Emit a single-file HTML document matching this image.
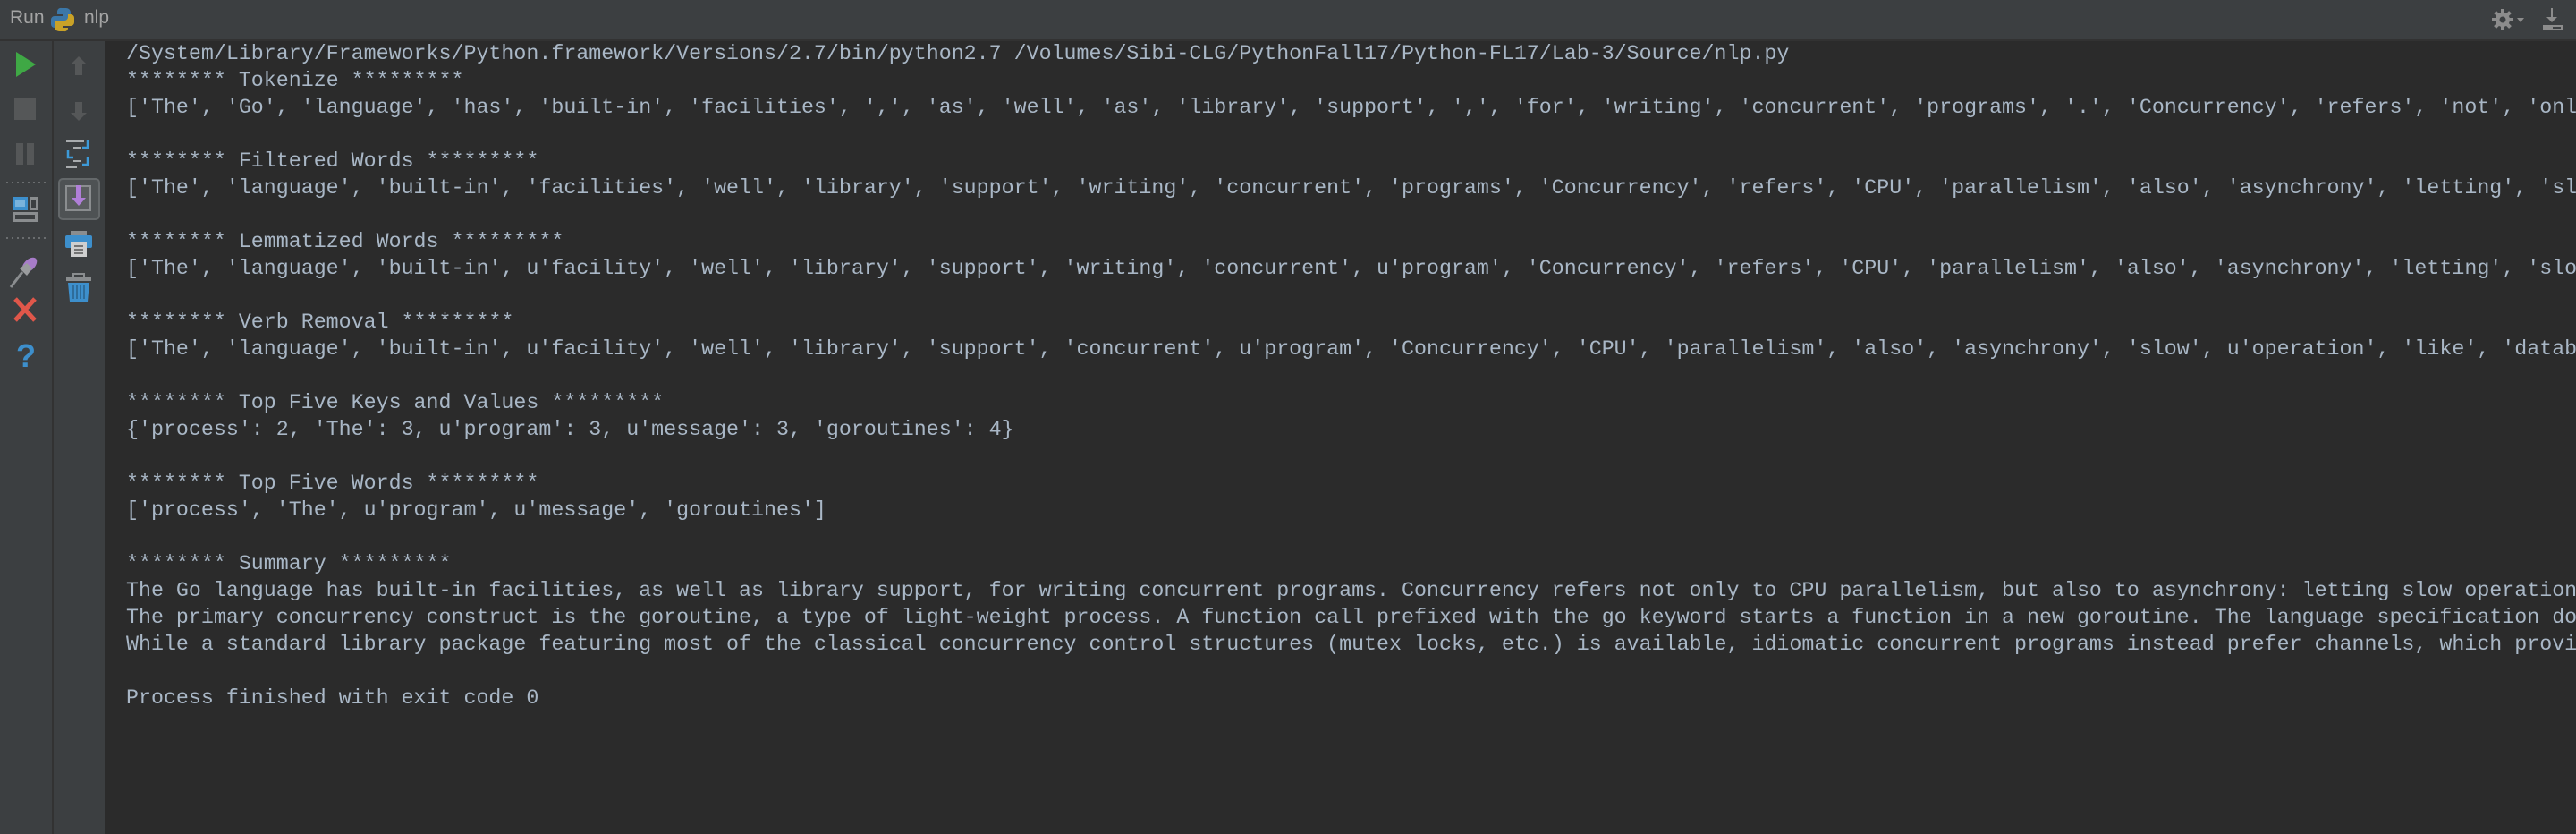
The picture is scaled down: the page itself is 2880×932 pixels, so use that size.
<!DOCTYPE html>
<html><head><meta charset="utf-8"><style>
html,body{margin:0;padding:0;width:2880px;height:932px;overflow:hidden;background:#2b2b2b}
#hdr{position:absolute;left:0;top:0;width:2880px;height:44px;background:#3c3f41;border-bottom:2px solid #323232}
#hdr .t{position:absolute;top:8px;font:21px "Liberation Sans",sans-serif;color:#a4a4a4}
#lp{position:absolute;left:0;top:46px;width:117px;height:886px;background:#3c3f41}
#div{position:absolute;left:58px;top:46px;width:2px;height:886px;background:#323232}
#con{position:absolute;left:141px;top:45px;right:0;font:23.3px/30px "Liberation Mono",monospace;color:#a9b7c6;white-space:pre;overflow:hidden}
</style></head><body>
<div id="hdr">
<span class="t" style="left:11px">Run</span>
<svg style="position:absolute;left:56px;top:8px" width="28" height="28" viewBox="0 0 28 28">
<path d="M13 1h5a5 5 0 0 1 5 5v7a3 3 0 0 1-3 3h-8a4 4 0 0 0-4 4v3H5a4 4 0 0 1-4-4v-5a4 4 0 0 1 4-4h9v-2H8V5a4 4 0 0 1 5-4z" fill="#3b77a8"/>
<path d="M15 27h-5a5 5 0 0 1-5-5v-4a3 3 0 0 1 3-3h8a4 4 0 0 0 4-4V8h3a4 4 0 0 1 4 4v5a4 4 0 0 1-4 4h-9v2h6v1a4 4 0 0 1-5 3z" fill="#c9a227"/>
</svg>
<span class="t" style="left:94px">nlp</span>
<svg style="position:absolute;left:2786px;top:10px" width="40" height="26" viewBox="0 0 40 26">
<g fill="#8c8c8c"><circle cx="12" cy="12" r="8"/>
<rect x="10" y="0" width="4" height="24"/><rect x="0" y="10" width="24" height="4"/>
<rect x="10" y="0" width="4" height="24" transform="rotate(45 12 12)"/><rect x="10" y="0" width="4" height="24" transform="rotate(-45 12 12)"/>
<path d="M28 10h8l-4 5z"/></g><circle cx="12" cy="12" r="3.5" fill="#3c3f41"/>
</svg>
<svg style="position:absolute;left:2842px;top:9px" width="24" height="26" viewBox="0 0 24 26">
<g fill="#8c8c8c"><rect x="10" y="0" width="2" height="12"/><path d="M5 10h12l-6 6z"/><rect x="1" y="19" width="22" height="6"/></g><rect x="12" y="21" width="9" height="2" fill="#3c3f41"/>
</svg>
</div>
<div id="lp"></div><div id="div"></div>
<svg style="position:absolute;left:0;top:46px" width="117" height="400" viewBox="0 46 117 400">
<path d="M18 58L40 72L18 86z" fill="#3fa845"/>
<rect x="16" y="110" width="24" height="24" fill="#555758"/>
<rect x="18" y="160" width="8" height="24" fill="#555758"/><rect x="30" y="160" width="8" height="24" fill="#555758"/>
<line x1="7" y1="204" x2="51" y2="204" stroke="#6a6d6f" stroke-width="2" stroke-dasharray="2 4"/>
<rect x="14" y="220" width="17" height="15" fill="#3d8fcc"/><rect x="17" y="223" width="11" height="8" fill="#7ab3dc"/>
<rect x="33" y="220" width="9" height="15" fill="#8a8d8f"/><rect x="35" y="223" width="5" height="9" fill="#3c3f41"/>
<rect x="14" y="237" width="28" height="11" fill="#8a8d8f"/><rect x="17" y="240" width="22" height="5" fill="#3c3f41"/>
<line x1="7" y1="266" x2="51" y2="266" stroke="#6a6d6f" stroke-width="2" stroke-dasharray="2 4"/>
<path d="M12 321L25 304" stroke="#8a8d8f" stroke-width="3"/>
<ellipse cx="33" cy="296" rx="10" ry="6" transform="rotate(-45 33 296)" fill="#a77cc9"/>
<path d="M22 300l8 8 6-8-6-6z" fill="#9a9c9e"/>
<path d="M17 334L39 358M39 334L17 358" stroke="#e0574a" stroke-width="5"/>
<text x="29" y="410" text-anchor="middle" font-family="Liberation Sans,sans-serif" font-weight="bold" font-size="36" fill="#3d8fcc">?</text>
<path d="M88 63l-9 9h5v12h8V72h5z" fill="#555758"/>
<path d="M88 135l-9-9h5V114h8v12h5z" fill="#555758"/>
<g stroke="#a9acae" stroke-width="2"><line x1="74" y1="158" x2="94" y2="158"/><line x1="74" y1="187" x2="86" y2="187"/></g>
<g stroke="#3d9ad8" stroke-width="2.5" fill="none"><path d="M98 157v8h-6"/><path d="M76 168v8h6"/><path d="M98 176v8h-6"/></g>
<g stroke="#a9acae" stroke-width="2"><line x1="82" y1="165" x2="90" y2="165"/><line x1="82" y1="180" x2="90" y2="180"/></g>
<rect x="66" y="200" width="45" height="45" rx="4" fill="#4e5254" stroke="#64686a" stroke-width="2"/>
<rect x="74" y="208" width="27" height="27" fill="#5a5d5f" stroke="#8a8d8f" stroke-width="2"/>
<path d="M91 207v14h5l-8 9-8-9h5V207z" fill="#b07fd8"/>
<rect x="79" y="258" width="18" height="6" fill="#8a8d8f"/>
<rect x="73" y="263" width="30" height="14" rx="2" fill="#3d8fcc"/>
<rect x="79" y="270" width="18" height="17" fill="#cfcfcf"/>
<g stroke="#555" stroke-width="1.5"><line x1="83" y1="275" x2="93" y2="275"/><line x1="83" y1="279" x2="93" y2="279"/><line x1="83" y1="283" x2="93" y2="283"/></g>
<rect x="82" y="306" width="12" height="4" fill="none" stroke="#8a8d8f" stroke-width="2"/>
<rect x="74" y="310" width="28" height="4" fill="#8a8d8f"/>
<path d="M76 316h24l-2 21H78z" fill="#3d8fcc"/>
<g stroke="#2e6c9a" stroke-width="2"><line x1="82" y1="319" x2="82" y2="334"/><line x1="86" y1="319" x2="86" y2="334"/><line x1="90" y1="319" x2="90" y2="334"/><line x1="94" y1="319" x2="94" y2="334"/></g>
</svg>
<div id="con">/System/Library/Frameworks/Python.framework/Versions/2.7/bin/python2.7 /Volumes/Sibi-CLG/PythonFall17/Python-FL17/Lab-3/Source/nlp.py
******** Tokenize *********
['The', 'Go', 'language', 'has', 'built-in', 'facilities', ',', 'as', 'well', 'as', 'library', 'support', ',', 'for', 'writing', 'concurrent', 'programs', '.', 'Concurrency', 'refers', 'not', 'only', 'to', 'CPU']

******** Filtered Words *********
['The', 'language', 'built-in', 'facilities', 'well', 'library', 'support', 'writing', 'concurrent', 'programs', 'Concurrency', 'refers', 'CPU', 'parallelism', 'also', 'asynchrony', 'letting', 'slow', 'operations']

******** Lemmatized Words *********
['The', 'language', 'built-in', u'facility', 'well', 'library', 'support', 'writing', 'concurrent', u'program', 'Concurrency', 'refers', 'CPU', 'parallelism', 'also', 'asynchrony', 'letting', 'slow', u'operation']

******** Verb Removal *********
['The', 'language', 'built-in', u'facility', 'well', 'library', 'support', 'concurrent', u'program', 'Concurrency', 'CPU', 'parallelism', 'also', 'asynchrony', 'slow', u'operation', 'like', 'database']

******** Top Five Keys and Values *********
{'process': 2, 'The': 3, u'program': 3, u'message': 3, 'goroutines': 4}

******** Top Five Words *********
['process', 'The', u'program', u'message', 'goroutines']

******** Summary *********
The Go language has built-in facilities, as well as library support, for writing concurrent programs. Concurrency refers not only to CPU parallelism, but also to asynchrony: letting slow operations like a database
The primary concurrency construct is the goroutine, a type of light-weight process. A function call prefixed with the go keyword starts a function in a new goroutine. The language specification does not
While a standard library package featuring most of the classical concurrency control structures (mutex locks, etc.) is available, idiomatic concurrent programs instead prefer channels, which provide

Process finished with exit code 0</div>
</body></html>
